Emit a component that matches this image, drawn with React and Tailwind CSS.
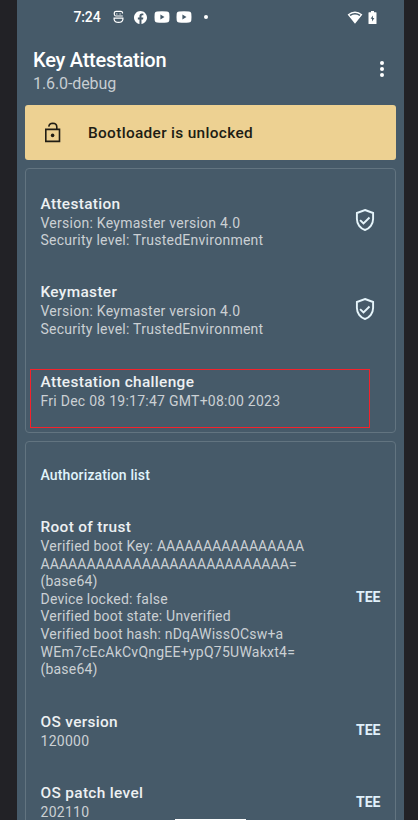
import React from "react";

function Shield() {
  return (
    <svg className="size-[24px] shrink-0" viewBox="0 0 24 24" fill="none" stroke="#e6f5fb" strokeWidth="1.9">
      <path d="M12 2 20.1 5V11.1C20.1 16.1 16.7 20.6 12 22 7.3 20.6 3.9 16.1 3.9 11.1V5Z" />
      <path d="m7.1 12.1 3.4 3.4 6-6" />
    </svg>
  );
}

function YouTube() {
  return (
    <svg className="h-[12px] w-[16px]" viewBox="0 0 16 12">
      <path fill="#fff" fillRule="evenodd" d="M3 .5Q8 0 13 .5Q15 .7 15.3 2.5Q15.7 6 15.3 9.5Q15 11.3 13 11.5Q8 12 3 11.5Q1 11.3.7 9.5Q.3 6 .7 2.5Q1 .7 3 .5ZM6.4 3.5V8.5L10.5 6Z" />
    </svg>
  );
}

function Item({ title, lines, end, className, bodyClass = "tracking-[0.26px]" }) {
  return (
    <div className={`flex items-center justify-between pl-[14.5px] ${className}`}>
      <div className="whitespace-nowrap">
        <h2 className="text-[15.4px] font-medium leading-[22px] tracking-[0.34px] text-[#edf0f2]">{title}</h2>
        <div className={`text-[14px] leading-[17.6px] text-[#cbd0d4] ${bodyClass}`}>
          {lines.map((line, i) => (
            <p key={i}>{line}</p>
          ))}
        </div>
      </div>
      {end}
    </div>
  );
}

const tee = <span className="mr-[14.5px] pb-[1px] text-[14px] font-bold leading-[18px] text-[#e0f0fa]">TEE</span>;
const shield = (
  <span className="mr-[18.5px] pb-[2px]">
    <Shield />
  </span>
);

export default function App() {
  return (
    <div className="relative flex h-[820px] w-[418px] overflow-hidden bg-[#222226] pl-[17px] font-['Roboto',sans-serif]">
      <main className="flex w-[387px] shrink-0 flex-col bg-[#465a69]">
        <div className="flex h-[34px] shrink-0 items-center pl-[56px] text-white">
          <span className="w-[40px] pl-[0.5px] text-[14px] font-medium leading-[18px] tracking-[-0.15px]">7:24</span>
          <svg className="h-[14px] w-[11px]" viewBox="0 0 11 14" fill="none" stroke="#fff" strokeWidth="1.2">
            <path d="M9.5 3.6V2.5Q9.3 1.4 8 1.4H3Q1.5 1.4 1.3 2.8V4.3Q1.5 6 3 6H9.8M1.1 8.2H9.9V9.3Q9.3 12.4 5.5 12.4Q1.7 12.4 1.1 9.3Z" />
            <path d="M3.2 4H4.4M6.5 4H7.7" />
          </svg>
          <svg className="ml-[9.5px] size-[13px]" viewBox="0 0 24 24">
            <path fill="#fff" d="M24 12.07C24 5.4 18.6 0 12 0S0 5.4 0 12.07C0 18.1 4.4 23.1 10.1 24v-8.4H7.1v-3.5h3V9.4c0-3 1.8-4.7 4.5-4.7 1.3 0 2.7.2 2.7.2v3h-1.5c-1.5 0-2 .9-2 1.9v2.3h3.4l-.5 3.5h-2.9V24C19.6 23.1 24 18.1 24 12.07Z" />
          </svg>
          <span className="ml-[7.5px] flex gap-[6px]">
            <YouTube />
            <YouTube />
          </span>
          <span className="ml-[12px] size-[4px] rounded-full bg-white" />
          <svg className="ml-[139px] h-[13px] w-[16px]" viewBox="0 0 16 13">
            <path fill="#fff" fillRule="evenodd" d="M.6 3.6Q8-2.4 15.4 3.6L8 12.7ZM2.5 3.8 3.5 5Q8 2.2 12.5 5L13.5 3.8Q8 .2 2.5 3.8Z" />
          </svg>
          <svg className="ml-[5px] h-[13px] w-[9px]" viewBox="0 0 9 13">
            <path fill="#fff" fillRule="evenodd" d="M3 0H6V1.3H8Q8.5 1.3 8.5 1.8V12.5Q8.5 13 8 13H1Q.5 13 .5 12.5V1.8Q.5 1.3 1 1.3H3ZM4.9 4.4 2.6 7.8H4V10.4L6.4 7H4.9Z" />
          </svg>
        </div>
        <header className="flex h-[71px] shrink-0 items-start justify-between pl-[16px] pr-[20px] pt-[14px]">
          <div className="whitespace-nowrap">
            <h1 className="text-[20px] font-medium leading-[25px] tracking-[-0.23px] text-white">Key Attestation</h1>
            <p className="text-[16px] leading-[22px] tracking-[-0.1px] text-[#c7cdd2]">1.6.0-debug</p>
          </div>
          <span className="flex flex-col gap-[2px] pt-[13px]">
            <i className="size-[4px] rounded-full bg-white" />
            <i className="size-[4px] rounded-full bg-white" />
            <i className="size-[4px] rounded-full bg-white" />
          </span>
        </header>
        <section className="mx-[8px] flex h-[55px] shrink-0 items-center rounded-[3px] bg-[#edd192] pl-[15px]">
          <svg className="h-[24px] w-[24px]" viewBox="0 0 24 24" fill="none" stroke="#201d14" strokeWidth="1.6">
            <path d="M5.8 8.4H19.5V20.4H5.8ZM8.8 5.6Q9.2 2.3 12.8 2.3 16.8 2.4 16.8 6V8.4" />
            <circle cx="12.6" cy="14.4" r="1.8" fill="#201d14" stroke="none" />
          </svg>
          <span className="ml-[24px] text-[15.4px] font-medium leading-[20px] tracking-[0.33px] text-[#201d14]">Bootloader is unlocked</span>
        </section>
        <section className="mx-[8px] mt-[8px] h-[265px] shrink-0 rounded-[4px] border border-[#627480] pt-[23.5px]">
          <Item title="Attestation" lines={["Version: Keymaster version 4.0", "Security level: TrustedEnvironment"]} end={shield} className="mb-[31.8px]" />
          <Item title="Keymaster" lines={["Version: Keymaster version 4.0", "Security level: TrustedEnvironment"]} end={shield} className="mb-[30.3px]" />
          <div className="ml-[4px] h-[59px] w-[340px] border border-[#f5222b] pt-[0.6px]">
            <Item title="Attestation challenge" lines={["Fri Dec 08 19:17:47 GMT+08:00 2023"]} className="-ml-[5px]" />
          </div>
        </section>
        <section className="mx-[8px] mt-[8px] h-[400px] shrink-0 rounded-[4px] border border-[#627480] pt-[23px]">
          <h2 className="mb-[31px] pl-[14.5px] text-[14px] font-medium leading-[20px] tracking-[0.14px] text-[#e0f4fc]">Authorization list</h2>
          <Item
            title="Root of trust"
            bodyClass="tracking-[0.2px]"
            lines={[
              <>Verified boot Key: <span className="tracking-[0.07px]">AAAAAAAAAAAAAAAA</span></>,
              <span className="tracking-[0.07px]">AAAAAAAAAAAAAAAAAAAAAAAAAAA=</span>,
              "(base64)",
              "Device locked: false",
              "Verified boot state: Unverified",
              "Verified boot hash: nDqAWissOCsw+a",
              <span className="tracking-[0.25px]">WEm7cEcAkCvQngEE+ypQ75UWakxt4=</span>,
              "(base64)",
            ]}
            end={tee}
            className="mb-[31.8px]"
          />
          <Item title="OS version" lines={["120000"]} end={tee} className="mb-[32.3px]" />
          <Item title="OS patch level" lines={["202110"]} end={tee} className="" />
        </section>
      </main>
      <div className="absolute left-[175px] top-[819px] h-px w-[71px] bg-white" />
    </div>
  );
}
